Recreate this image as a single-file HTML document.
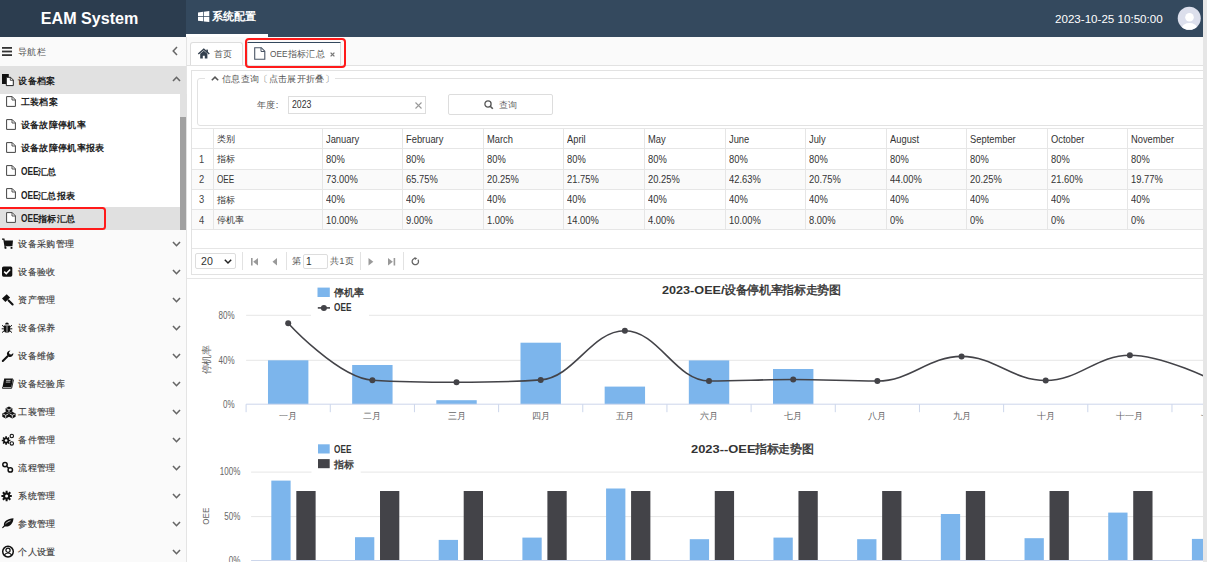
<!DOCTYPE html><html><head><meta charset="utf-8"><style>
*{margin:0;padding:0;box-sizing:border-box}
html,body{width:1207px;height:562px;overflow:hidden;background:#fff;font-family:"Liberation Sans",sans-serif;}
.a{position:absolute}
.t{position:absolute;white-space:nowrap;line-height:1}
svg{position:absolute;overflow:visible}
</style></head><body><div class="a" style="left:0px;top:0px;width:186px;height:37px;background:#2c3d4f;"></div>
<div class="a" style="left:186px;top:0px;width:1017px;height:37px;background:#34495e;"></div>
<div class="t" style="left:40.8px;top:9.9px;font-size:16.1px;color:#fff;font-weight:700;">EAM System</div>
<svg style="left:197.5px;top:11px" width="12" height="11" viewBox="0 0 12 11"><path d="M0 1.4L5.2 0.8V5.2H0Z M5.9 0.7L11.3 0V5.2H5.9Z M0 5.9H5.2V10.3L0 9.7Z M5.9 5.9H11.3V11L5.9 10.4Z" fill="#fff"/></svg>
<div class="t" style="left:212.3px;top:10.8px;font-size:11px;color:#fff;font-weight:700;">系统配置</div>
<div class="a" style="left:186px;top:34px;width:81.5px;height:3px;background:#fff;"></div>
<div class="t" style="left:1055px;top:12.9px;font-size:11.6px;color:#fff;font-weight:400;">2023-10-25 10:50:00</div>
<svg style="left:1177px;top:5.7px" width="25" height="25" viewBox="0 0 25 25"><defs><clipPath id="avc"><circle cx="12.25" cy="12.25" r="11.5"/></clipPath></defs><circle cx="12.25" cy="12.25" r="11.5" fill="#dcdfec"/><g clip-path="url(#avc)" fill="#fff"><circle cx="12.5" cy="11.3" r="4.3"/><ellipse cx="12.5" cy="22" rx="7.5" ry="5"/></g></svg>
<div class="a" style="left:0px;top:37px;width:186px;height:525px;background:#fafafa;"></div>
<div class="a" style="left:186px;top:37px;width:1px;height:525px;background:#e4e4e4;"></div>
<svg style="left:2px;top:47px" width="10" height="9" viewBox="0 0 10 9"><rect x="0" y="0" width="10" height="1.8" fill="#333"/><rect x="0" y="3.6" width="10" height="1.8" fill="#333"/><rect x="0" y="7.2" width="10" height="1.8" fill="#333"/></svg>
<div class="t" style="left:18px;top:47px;font-size:9.4px;color:#555;font-weight:400;letter-spacing:0.35px">导航栏</div>
<svg style="left:172px;top:46px" width="6" height="10" viewBox="0 0 6 10"><path d="M5 1L1.2 5L5 9" stroke="#666" stroke-width="1.5" fill="none"/></svg>
<div class="a" style="left:0px;top:66px;width:186px;height:28px;background:#e1e1e1;"></div>
<svg style="left:2px;top:74px" width="13" height="13" viewBox="0 0 13 13"><rect x="0" y="0" width="6.8" height="10" fill="#111"/><path d="M4.3 3.3H8.6L11.3 6V11.6H4.3Z" fill="#fff" stroke="#222" stroke-width="1"/><path d="M8.3 3.3V6.3H11.3" fill="none" stroke="#222" stroke-width="0.8"/></svg>
<div class="t" style="left:18.3px;top:76px;font-size:9.4px;color:#222;font-weight:700;letter-spacing:0.35px">设备档案</div>
<svg style="left:172px;top:76px" width="9" height="6" viewBox="0 0 9 6"><path d="M1 5L4.5 1.3L8 5" stroke="#666" stroke-width="1.6" fill="none"/></svg>
<div class="a" style="left:0px;top:94px;width:180px;height:136px;background:#fff;"></div>
<div class="a" style="left:180px;top:94px;width:7px;height:136px;background:#e1e1e1;"></div>
<div class="a" style="left:180px;top:117px;width:6px;height:113px;background:#a1a1a1;"></div>
<div class="a" style="left:0px;top:207px;width:180px;height:23px;background:#e0e0e0;"></div>
<svg style="left:6px;top:95.5px" width="10" height="11" viewBox="0 0 10 11"><path d="M0.6 0.6H6.2L9.4 3.8V10.4H0.6Z" fill="#fff" stroke="#444" stroke-width="1"/><path d="M6 0.6V4H9.4" fill="none" stroke="#444" stroke-width="0.9"/></svg>
<div class="t" style="left:20.5px;top:96.7px;font-size:9.4px;color:#222;font-weight:700;letter-spacing:0.35px">工装档案</div>
<svg style="left:6px;top:118.8px" width="10" height="11" viewBox="0 0 10 11"><path d="M0.6 0.6H6.2L9.4 3.8V10.4H0.6Z" fill="#fff" stroke="#444" stroke-width="1"/><path d="M6 0.6V4H9.4" fill="none" stroke="#444" stroke-width="0.9"/></svg>
<div class="t" style="left:20.5px;top:120.0px;font-size:9.4px;color:#222;font-weight:700;letter-spacing:0.35px">设备故障停机率</div>
<svg style="left:6px;top:142px" width="10" height="11" viewBox="0 0 10 11"><path d="M0.6 0.6H6.2L9.4 3.8V10.4H0.6Z" fill="#fff" stroke="#444" stroke-width="1"/><path d="M6 0.6V4H9.4" fill="none" stroke="#444" stroke-width="0.9"/></svg>
<div class="t" style="left:20.5px;top:143.2px;font-size:9.4px;color:#222;font-weight:700;letter-spacing:0.35px">设备故障停机率报表</div>
<svg style="left:6px;top:165.2px" width="10" height="11" viewBox="0 0 10 11"><path d="M0.6 0.6H6.2L9.4 3.8V10.4H0.6Z" fill="#fff" stroke="#444" stroke-width="1"/><path d="M6 0.6V4H9.4" fill="none" stroke="#444" stroke-width="0.9"/></svg>
<div class="t" style="left:20.5px;top:166.39999999999998px;font-size:9.4px;color:#222;font-weight:700;letter-spacing:0.35px"><span style="font-size:11px"><span style="display:inline-block;letter-spacing:0;transform:scaleX(0.758);transform-origin:0 50%;margin-right:-5.63px">OEE</span></span>汇总</div>
<svg style="left:6px;top:188.4px" width="10" height="11" viewBox="0 0 10 11"><path d="M0.6 0.6H6.2L9.4 3.8V10.4H0.6Z" fill="#fff" stroke="#444" stroke-width="1"/><path d="M6 0.6V4H9.4" fill="none" stroke="#444" stroke-width="0.9"/></svg>
<div class="t" style="left:20.5px;top:189.6px;font-size:9.4px;color:#222;font-weight:700;letter-spacing:0.35px"><span style="font-size:11px"><span style="display:inline-block;letter-spacing:0;transform:scaleX(0.758);transform-origin:0 50%;margin-right:-5.63px">OEE</span></span>汇总报表</div>
<svg style="left:6px;top:211.6px" width="10" height="11" viewBox="0 0 10 11"><path d="M0.6 0.6H6.2L9.4 3.8V10.4H0.6Z" fill="#fff" stroke="#444" stroke-width="1"/><path d="M6 0.6V4H9.4" fill="none" stroke="#444" stroke-width="0.9"/></svg>
<div class="t" style="left:20.5px;top:212.79999999999998px;font-size:9.4px;color:#222;font-weight:700;letter-spacing:0.35px"><span style="font-size:11px"><span style="display:inline-block;letter-spacing:0;transform:scaleX(0.758);transform-origin:0 50%;margin-right:-5.63px">OEE</span></span>指标汇总</div>
<div class="a" style="left:-3px;top:207px;width:108.5px;height:23.3px;border:2.7px solid #ff1a1a;border-radius:3.5px"></div>
<svg style="left:2px;top:237.8px" width="12" height="12" viewBox="0 0 12 12"><path d="M0 1.2H1.9L3.3 9.6" stroke="#111" stroke-width="1.3" fill="none"/><path d="M2.3 2.6H11L10.4 8.2H3.3Z" fill="#111"/><rect x="2.6" y="9" width="1.8" height="1.8" fill="#111"/><rect x="8.6" y="9" width="1.8" height="1.8" fill="#111"/></svg>
<div class="t" style="left:18.2px;top:238.9px;font-size:9.4px;color:#3a3a3a;font-weight:400;letter-spacing:0.35px;-webkit-text-stroke:0.15px #3a3a3a">设备采购管理</div>
<svg style="left:172px;top:240.8px" width="9" height="6" viewBox="0 0 9 6"><path d="M1 1L4.5 4.7L8 1" stroke="#666" stroke-width="1.6" fill="none"/></svg>
<svg style="left:2px;top:265.8px" width="12" height="12" viewBox="0 0 12 12"><rect x="0" y="0.5" width="10.3" height="10.2" rx="1.6" fill="#111"/><path d="M2.2 5.6L4.3 7.6L8.2 3.4" stroke="#fff" stroke-width="1.5" fill="none"/></svg>
<div class="t" style="left:18.2px;top:266.90000000000003px;font-size:9.4px;color:#3a3a3a;font-weight:400;letter-spacing:0.35px;-webkit-text-stroke:0.15px #3a3a3a">设备验收</div>
<svg style="left:172px;top:268.8px" width="9" height="6" viewBox="0 0 9 6"><path d="M1 1L4.5 4.7L8 1" stroke="#666" stroke-width="1.6" fill="none"/></svg>
<svg style="left:2px;top:293.8px" width="12" height="12" viewBox="0 0 12 12"><path d="M0 4.6L4.7 0.2L8.1 3.6L3.4 8Z" fill="#111"/><path d="M6.6 6.4L10.6 10.4" stroke="#111" stroke-width="2.1" stroke-linecap="round"/></svg>
<div class="t" style="left:18.2px;top:294.90000000000003px;font-size:9.4px;color:#3a3a3a;font-weight:400;letter-spacing:0.35px;-webkit-text-stroke:0.15px #3a3a3a">资产管理</div>
<svg style="left:172px;top:296.8px" width="9" height="6" viewBox="0 0 9 6"><path d="M1 1L4.5 4.7L8 1" stroke="#666" stroke-width="1.6" fill="none"/></svg>
<svg style="left:2px;top:321.8px" width="12" height="12" viewBox="0 0 12 12"><path d="M3.1 2.4A1.9 1.9 0 0 1 6.9 2.4Z" fill="#111"/><path d="M1.8 3.6H8.2V7.6A3.2 3.2 0 0 1 1.8 7.6Z" fill="#111"/><path d="M5 3.6V10.6" stroke="#fafafa" stroke-width="0.7"/><path d="M0 3.2L1.8 4.8M10 3.2L8.2 4.8M-0.3 6.8H1.8M10.3 6.8H8.2M0 10.6L2 8.9M10 10.6L8 8.9" stroke="#111" stroke-width="1"/></svg>
<div class="t" style="left:18.2px;top:322.90000000000003px;font-size:9.4px;color:#3a3a3a;font-weight:400;letter-spacing:0.35px;-webkit-text-stroke:0.15px #3a3a3a">设备保养</div>
<svg style="left:172px;top:324.8px" width="9" height="6" viewBox="0 0 9 6"><path d="M1 1L4.5 4.7L8 1" stroke="#666" stroke-width="1.6" fill="none"/></svg>
<svg style="left:2px;top:349.8px" width="12" height="12" viewBox="0 0 12 12"><path d="M0.8 11L5.6 6.2" stroke="#111" stroke-width="2" stroke-linecap="round"/><path d="M5.2 5.2A3.4 3.4 0 0 1 8.4 0.4L6.9 2.5L7.6 4.2L9.4 4.6L11.3 3.1A3.4 3.4 0 0 1 6.6 6.8Z" fill="#111"/></svg>
<div class="t" style="left:18.2px;top:350.90000000000003px;font-size:9.4px;color:#3a3a3a;font-weight:400;letter-spacing:0.35px;-webkit-text-stroke:0.15px #3a3a3a">设备维修</div>
<svg style="left:172px;top:352.8px" width="9" height="6" viewBox="0 0 9 6"><path d="M1 1L4.5 4.7L8 1" stroke="#666" stroke-width="1.6" fill="none"/></svg>
<svg style="left:2px;top:377.8px" width="12" height="12" viewBox="0 0 12 12"><path d="M2.2 0.4H11L9.3 9.2H0.5Z" fill="#111"/><path d="M0.5 9.2V10.3H9.6L11.5 1.6" stroke="#111" stroke-width="0.9" fill="none"/><path d="M4.1 2.4H8.6M3.8 4.1H8.3" stroke="#fafafa" stroke-width="0.7"/></svg>
<div class="t" style="left:18.2px;top:378.90000000000003px;font-size:9.4px;color:#3a3a3a;font-weight:400;letter-spacing:0.35px;-webkit-text-stroke:0.15px #3a3a3a">设备经验库</div>
<svg style="left:172px;top:380.8px" width="9" height="6" viewBox="0 0 9 6"><path d="M1 1L4.5 4.7L8 1" stroke="#666" stroke-width="1.6" fill="none"/></svg>
<svg style="left:2px;top:405.8px" width="12" height="12" viewBox="0 0 12 12"><path d="M3.6 2.2L7 0.4L10.4 2.2V5.4L7 7.2L3.6 5.4Z" fill="#111"/><path d="M0.3 7.6L3.7 5.8L7.1 7.6V10.8L3.7 12.6L0.3 10.8Z" fill="#111"/><path d="M6.9 7.6L10.3 5.8L13.6 7.6V10.8L10.3 12.6L6.9 10.8Z" fill="#111"/><path d="M4.4 2.6L7 3.9L9.6 2.6M7 3.9V6.4M1.1 8L3.7 9.3L6.3 8M3.7 9.3V11.8M7.7 8L10.3 9.3L12.9 8M10.3 9.3V11.8" stroke="#fafafa" stroke-width="0.8" fill="none"/></svg>
<div class="t" style="left:18.2px;top:406.90000000000003px;font-size:9.4px;color:#3a3a3a;font-weight:400;letter-spacing:0.35px;-webkit-text-stroke:0.15px #3a3a3a">工装管理</div>
<svg style="left:172px;top:408.8px" width="9" height="6" viewBox="0 0 9 6"><path d="M1 1L4.5 4.7L8 1" stroke="#666" stroke-width="1.6" fill="none"/></svg>
<svg style="left:2px;top:433.8px" width="12" height="12" viewBox="0 0 12 12"><circle cx="4.1" cy="6.5" r="3" fill="#111"/><path d="M4.1 2.2V10.8M-0.2 6.5H8.4M1.1 3.5L7.1 9.5M7.1 3.5L1.1 9.5" stroke="#111" stroke-width="1.7"/><circle cx="4.1" cy="6.5" r="1.3" fill="#fafafa"/><circle cx="9.8" cy="2" r="1.7" fill="none" stroke="#111" stroke-width="1.1"/><circle cx="9.8" cy="9.4" r="1.7" fill="none" stroke="#111" stroke-width="1.1"/></svg>
<div class="t" style="left:18.2px;top:434.90000000000003px;font-size:9.4px;color:#3a3a3a;font-weight:400;letter-spacing:0.35px;-webkit-text-stroke:0.15px #3a3a3a">备件管理</div>
<svg style="left:172px;top:436.8px" width="9" height="6" viewBox="0 0 9 6"><path d="M1 1L4.5 4.7L8 1" stroke="#666" stroke-width="1.6" fill="none"/></svg>
<svg style="left:2px;top:461.8px" width="12" height="12" viewBox="0 0 12 12"><circle cx="3" cy="2.6" r="2.2" fill="none" stroke="#111" stroke-width="1.5"/><circle cx="8.3" cy="7.9" r="2.2" fill="none" stroke="#111" stroke-width="1.5"/><path d="M4.6 4.2L6.7 6.3" stroke="#111" stroke-width="1.5"/></svg>
<div class="t" style="left:18.2px;top:462.90000000000003px;font-size:9.4px;color:#3a3a3a;font-weight:400;letter-spacing:0.35px;-webkit-text-stroke:0.15px #3a3a3a">流程管理</div>
<svg style="left:172px;top:464.8px" width="9" height="6" viewBox="0 0 9 6"><path d="M1 1L4.5 4.7L8 1" stroke="#666" stroke-width="1.6" fill="none"/></svg>
<svg style="left:2px;top:489.8px" width="12" height="12" viewBox="0 0 12 12"><circle cx="4.6" cy="6" r="3.5" fill="#111"/><path d="M4.6 0.8V11.2M-0.6 6H9.8M0.9 2.3L8.3 9.7M8.3 2.3L0.9 9.7" stroke="#111" stroke-width="2"/><circle cx="4.6" cy="6" r="1.5" fill="#fafafa"/></svg>
<div class="t" style="left:18.2px;top:490.90000000000003px;font-size:9.4px;color:#3a3a3a;font-weight:400;letter-spacing:0.35px;-webkit-text-stroke:0.15px #3a3a3a">系统管理</div>
<svg style="left:172px;top:492.8px" width="9" height="6" viewBox="0 0 9 6"><path d="M1 1L4.5 4.7L8 1" stroke="#666" stroke-width="1.6" fill="none"/></svg>
<svg style="left:2px;top:517.8px" width="12" height="12" viewBox="0 0 12 12"><path d="M0 9.8C0.8 8.6 1.6 7.8 2 7.6C1.2 3 5.5 1 11.5 0.2C11.2 5.8 7.5 9.4 2.8 8.4L0.8 10.3Z" fill="#111"/><path d="M3.5 5.8C5 4.2 6.8 3.3 8.5 2.8" stroke="#fafafa" stroke-width="0.8" fill="none"/></svg>
<div class="t" style="left:18.2px;top:518.9px;font-size:9.4px;color:#3a3a3a;font-weight:400;letter-spacing:0.35px;-webkit-text-stroke:0.15px #3a3a3a">参数管理</div>
<svg style="left:172px;top:520.8px" width="9" height="6" viewBox="0 0 9 6"><path d="M1 1L4.5 4.7L8 1" stroke="#666" stroke-width="1.6" fill="none"/></svg>
<svg style="left:2px;top:545.8px" width="12" height="12" viewBox="0 0 12 12"><circle cx="6" cy="5.6" r="5.3" fill="#fff" stroke="#111" stroke-width="1.5"/><circle cx="6" cy="4.2" r="2.1" fill="#fff" stroke="#111" stroke-width="1.2"/><path d="M2.3 9.3C3 7.6 4.4 7 6 7C7.6 7 9 7.6 9.7 9.3" fill="none" stroke="#111" stroke-width="1.2"/></svg>
<div class="t" style="left:18.2px;top:546.9px;font-size:9.4px;color:#3a3a3a;font-weight:400;letter-spacing:0.35px;-webkit-text-stroke:0.15px #3a3a3a">个人设置</div>
<svg style="left:172px;top:548.8px" width="9" height="6" viewBox="0 0 9 6"><path d="M1 1L4.5 4.7L8 1" stroke="#666" stroke-width="1.6" fill="none"/></svg>
<div class="a" style="left:187px;top:37px;width:1016px;height:29px;background:#fafafa;"></div>
<div class="a" style="left:187px;top:65px;width:1016px;height:1px;background:#e2e2e2;"></div>
<div class="a" style="left:190.3px;top:41.7px;width:52.3px;height:23.6px;background:#fff;border:1px solid #ddd;border-bottom:none;border-radius:3px 3px 0 0"></div>
<svg style="left:198px;top:48.5px" width="12" height="10" viewBox="0 0 12 10"><path d="M0.3 5L5.8 0.3L11.3 5" stroke="#34404e" stroke-width="1.5" fill="none"/><path d="M2.2 4.8L5.8 1.8L9.4 4.8V9.5H6.8V6.8H4.8V9.5H2.2Z" fill="#34404e"/><rect x="8.3" y="0.6" width="1.6" height="3" fill="#34404e"/></svg>
<div class="t" style="left:214px;top:49px;font-size:9.4px;color:#555;font-weight:400;letter-spacing:0.35px">首页</div>
<div class="a" style="left:247px;top:41.6px;width:93.5px;height:23.8px;background:#fff;border:1px solid #ddd;border-top:1.6px solid #34495e;border-bottom:none"></div>
<svg style="left:254px;top:47.3px" width="12" height="13" viewBox="0 0 12 13"><path d="M0.7 0.7H7.3L10.8 4.2V12.2H0.7Z" fill="#fff" stroke="#4a5565" stroke-width="1.1"/><path d="M7 0.7V4.5H10.8" fill="none" stroke="#4a5565" stroke-width="1"/></svg>
<div class="t" style="left:270px;top:49px;font-size:9.4px;color:#555;font-weight:400;letter-spacing:0.35px"><span style="display:inline-block;letter-spacing:0;transform:scaleX(0.883);transform-origin:0 50%;margin-right:-2.31px">OEE</span>指标汇总</div>
<svg style="left:330px;top:51.5px" width="5" height="5" viewBox="0 0 5 5"><path d="M0.6 0.6L4.4 4.4M4.4 0.6L0.6 4.4" stroke="#777" stroke-width="1.3"/></svg>
<div class="a" style="left:244.8px;top:38.2px;width:101.4px;height:30px;border:2.9px solid #ff1a1a;border-radius:4px"></div>
<div class="a" style="left:191px;top:70.3px;width:1030px;height:204.5px;border:1px solid #e2e2e2;background:#fff"></div>
<div class="a" style="left:197.3px;top:77.8px;width:1030px;height:48px;border:1px solid #e2e2e2;border-radius:3px"></div>
<div class="a" style="left:205px;top:74px;width:130px;height:6px;background:#fff;"></div>
<svg style="left:211px;top:76.3px" width="8" height="5" viewBox="0 0 8 5"><path d="M0.8 4.3L4 1.1L7.2 4.3" stroke="#555" stroke-width="1.5" fill="none"/></svg>
<div class="t" style="left:222px;top:74.3px;font-size:9.4px;color:#555;font-weight:400;letter-spacing:0.35px">信息查询〔点击展开折叠〕</div>
<div class="t" style="left:257px;top:100.2px;font-size:9.4px;color:#555;font-weight:400;letter-spacing:0.35px">年度:</div>
<div class="a" style="left:288px;top:96px;width:137.7px;height:17.8px;border:1px solid #ddd"></div>
<div class="t" style="left:292px;top:99.8px;font-size:10.4px;color:#333;font-weight:400;transform:scaleX(.84);transform-origin:0 0">2023</div>
<svg style="left:415px;top:102px" width="7" height="7" viewBox="0 0 7 7"><path d="M0.5 0.5L6.5 6.5M6.5 0.5L0.5 6.5" stroke="#999" stroke-width="1.1"/></svg>
<div class="a" style="left:448px;top:94.3px;width:104.6px;height:20.6px;border:1px solid #ddd;border-radius:2px"></div>
<svg style="left:484px;top:100px" width="10" height="10" viewBox="0 0 10 10"><circle cx="4" cy="4" r="3.1" fill="none" stroke="#555" stroke-width="1.3"/><path d="M6.2 6.2L8.8 8.8" stroke="#555" stroke-width="1.6"/></svg>
<div class="t" style="left:499px;top:99.8px;font-size:9.4px;color:#666;font-weight:400;letter-spacing:0.35px">查询</div>
<div class="a" style="left:191.5px;top:169.6px;width:1020px;height:19.2px;background:#fafafa;"></div>
<div class="a" style="left:191.5px;top:210px;width:1020px;height:19px;background:#fafafa;"></div>
<div class="a" style="left:191.5px;top:128px;width:1020px;height:1px;background:#e6e6e6;"></div>
<div class="a" style="left:191.5px;top:148px;width:1020px;height:1px;background:#e6e6e6;"></div>
<div class="a" style="left:191.5px;top:168.6px;width:1020px;height:1px;background:#e6e6e6;"></div>
<div class="a" style="left:191.5px;top:188.8px;width:1020px;height:1px;background:#e6e6e6;"></div>
<div class="a" style="left:191.5px;top:209px;width:1020px;height:1px;background:#e6e6e6;"></div>
<div class="a" style="left:191.5px;top:229px;width:1020px;height:1px;background:#e6e6e6;"></div>
<div class="a" style="left:213px;top:128px;width:1px;height:102px;background:#e6e6e6;"></div>
<div class="a" style="left:322px;top:128px;width:1px;height:102px;background:#e6e6e6;"></div>
<div class="a" style="left:402.3px;top:128px;width:1px;height:102px;background:#e6e6e6;"></div>
<div class="a" style="left:482.7px;top:128px;width:1px;height:102px;background:#e6e6e6;"></div>
<div class="a" style="left:563.2px;top:128px;width:1px;height:102px;background:#e6e6e6;"></div>
<div class="a" style="left:643.6px;top:128px;width:1px;height:102px;background:#e6e6e6;"></div>
<div class="a" style="left:724.8px;top:128px;width:1px;height:102px;background:#e6e6e6;"></div>
<div class="a" style="left:805.3px;top:128px;width:1px;height:102px;background:#e6e6e6;"></div>
<div class="a" style="left:885.8px;top:128px;width:1px;height:102px;background:#e6e6e6;"></div>
<div class="a" style="left:966.3px;top:128px;width:1px;height:102px;background:#e6e6e6;"></div>
<div class="a" style="left:1046.9px;top:128px;width:1px;height:102px;background:#e6e6e6;"></div>
<div class="a" style="left:1127.4px;top:128px;width:1px;height:102px;background:#e6e6e6;"></div>
<div class="a" style="left:1208px;top:128px;width:1px;height:102px;background:#e6e6e6;"></div>
<div class="t" style="left:217px;top:134.3px;font-size:9.4px;color:#333;font-weight:400;">类别</div>
<div class="t" style="left:326px;top:133.6px;font-size:10.5px;color:#333;font-weight:400;transform:scaleX(.89);transform-origin:0 0">January</div>
<div class="t" style="left:406.3px;top:133.6px;font-size:10.5px;color:#333;font-weight:400;transform:scaleX(.89);transform-origin:0 0">February</div>
<div class="t" style="left:486.7px;top:133.6px;font-size:10.5px;color:#333;font-weight:400;transform:scaleX(.89);transform-origin:0 0">March</div>
<div class="t" style="left:567.2px;top:133.6px;font-size:10.5px;color:#333;font-weight:400;transform:scaleX(.89);transform-origin:0 0">April</div>
<div class="t" style="left:647.6px;top:133.6px;font-size:10.5px;color:#333;font-weight:400;transform:scaleX(.89);transform-origin:0 0">May</div>
<div class="t" style="left:728.8px;top:133.6px;font-size:10.5px;color:#333;font-weight:400;transform:scaleX(.89);transform-origin:0 0">June</div>
<div class="t" style="left:809.3px;top:133.6px;font-size:10.5px;color:#333;font-weight:400;transform:scaleX(.89);transform-origin:0 0">July</div>
<div class="t" style="left:889.8px;top:133.6px;font-size:10.5px;color:#333;font-weight:400;transform:scaleX(.89);transform-origin:0 0">August</div>
<div class="t" style="left:970.3px;top:133.6px;font-size:10.5px;color:#333;font-weight:400;transform:scaleX(.89);transform-origin:0 0">September</div>
<div class="t" style="left:1050.9px;top:133.6px;font-size:10.5px;color:#333;font-weight:400;transform:scaleX(.89);transform-origin:0 0">October</div>
<div class="t" style="left:1131.4px;top:133.6px;font-size:10.5px;color:#333;font-weight:400;transform:scaleX(.89);transform-origin:0 0">November</div>
<div class="t" style="left:199.3px;top:153.6px;font-size:10.5px;color:#444;font-weight:400;transform:scaleX(.89);transform-origin:0 0">1</div>
<div class="t" style="left:217px;top:154.3px;font-size:9.4px;color:#333;font-weight:400;">指标</div>
<div class="t" style="left:326px;top:153.6px;font-size:10.5px;color:#333;font-weight:400;transform:scaleX(.89);transform-origin:0 0">80%</div>
<div class="t" style="left:406.3px;top:153.6px;font-size:10.5px;color:#333;font-weight:400;transform:scaleX(.89);transform-origin:0 0">80%</div>
<div class="t" style="left:486.7px;top:153.6px;font-size:10.5px;color:#333;font-weight:400;transform:scaleX(.89);transform-origin:0 0">80%</div>
<div class="t" style="left:567.2px;top:153.6px;font-size:10.5px;color:#333;font-weight:400;transform:scaleX(.89);transform-origin:0 0">80%</div>
<div class="t" style="left:647.6px;top:153.6px;font-size:10.5px;color:#333;font-weight:400;transform:scaleX(.89);transform-origin:0 0">80%</div>
<div class="t" style="left:728.8px;top:153.6px;font-size:10.5px;color:#333;font-weight:400;transform:scaleX(.89);transform-origin:0 0">80%</div>
<div class="t" style="left:809.3px;top:153.6px;font-size:10.5px;color:#333;font-weight:400;transform:scaleX(.89);transform-origin:0 0">80%</div>
<div class="t" style="left:889.8px;top:153.6px;font-size:10.5px;color:#333;font-weight:400;transform:scaleX(.89);transform-origin:0 0">80%</div>
<div class="t" style="left:970.3px;top:153.6px;font-size:10.5px;color:#333;font-weight:400;transform:scaleX(.89);transform-origin:0 0">80%</div>
<div class="t" style="left:1050.9px;top:153.6px;font-size:10.5px;color:#333;font-weight:400;transform:scaleX(.89);transform-origin:0 0">80%</div>
<div class="t" style="left:1131.4px;top:153.6px;font-size:10.5px;color:#333;font-weight:400;transform:scaleX(.89);transform-origin:0 0">80%</div>
<div class="t" style="left:199.3px;top:174.2px;font-size:10.5px;color:#444;font-weight:400;transform:scaleX(.89);transform-origin:0 0">2</div>
<div class="t" style="left:217px;top:174.2px;font-size:10.5px;color:#333;font-weight:400;"><span style="display:inline-block;letter-spacing:0;transform:scaleX(0.777);transform-origin:0 50%;margin-right:-4.93px">OEE</span></div>
<div class="t" style="left:326px;top:174.2px;font-size:10.5px;color:#333;font-weight:400;transform:scaleX(.89);transform-origin:0 0">73.00%</div>
<div class="t" style="left:406.3px;top:174.2px;font-size:10.5px;color:#333;font-weight:400;transform:scaleX(.89);transform-origin:0 0">65.75%</div>
<div class="t" style="left:486.7px;top:174.2px;font-size:10.5px;color:#333;font-weight:400;transform:scaleX(.89);transform-origin:0 0">20.25%</div>
<div class="t" style="left:567.2px;top:174.2px;font-size:10.5px;color:#333;font-weight:400;transform:scaleX(.89);transform-origin:0 0">21.75%</div>
<div class="t" style="left:647.6px;top:174.2px;font-size:10.5px;color:#333;font-weight:400;transform:scaleX(.89);transform-origin:0 0">20.25%</div>
<div class="t" style="left:728.8px;top:174.2px;font-size:10.5px;color:#333;font-weight:400;transform:scaleX(.89);transform-origin:0 0">42.63%</div>
<div class="t" style="left:809.3px;top:174.2px;font-size:10.5px;color:#333;font-weight:400;transform:scaleX(.89);transform-origin:0 0">20.75%</div>
<div class="t" style="left:889.8px;top:174.2px;font-size:10.5px;color:#333;font-weight:400;transform:scaleX(.89);transform-origin:0 0">44.00%</div>
<div class="t" style="left:970.3px;top:174.2px;font-size:10.5px;color:#333;font-weight:400;transform:scaleX(.89);transform-origin:0 0">20.25%</div>
<div class="t" style="left:1050.9px;top:174.2px;font-size:10.5px;color:#333;font-weight:400;transform:scaleX(.89);transform-origin:0 0">21.60%</div>
<div class="t" style="left:1131.4px;top:174.2px;font-size:10.5px;color:#333;font-weight:400;transform:scaleX(.89);transform-origin:0 0">19.77%</div>
<div class="t" style="left:199.3px;top:194.4px;font-size:10.5px;color:#444;font-weight:400;transform:scaleX(.89);transform-origin:0 0">3</div>
<div class="t" style="left:217px;top:195.10000000000002px;font-size:9.4px;color:#333;font-weight:400;">指标</div>
<div class="t" style="left:326px;top:194.4px;font-size:10.5px;color:#333;font-weight:400;transform:scaleX(.89);transform-origin:0 0">40%</div>
<div class="t" style="left:406.3px;top:194.4px;font-size:10.5px;color:#333;font-weight:400;transform:scaleX(.89);transform-origin:0 0">40%</div>
<div class="t" style="left:486.7px;top:194.4px;font-size:10.5px;color:#333;font-weight:400;transform:scaleX(.89);transform-origin:0 0">40%</div>
<div class="t" style="left:567.2px;top:194.4px;font-size:10.5px;color:#333;font-weight:400;transform:scaleX(.89);transform-origin:0 0">40%</div>
<div class="t" style="left:647.6px;top:194.4px;font-size:10.5px;color:#333;font-weight:400;transform:scaleX(.89);transform-origin:0 0">40%</div>
<div class="t" style="left:728.8px;top:194.4px;font-size:10.5px;color:#333;font-weight:400;transform:scaleX(.89);transform-origin:0 0">40%</div>
<div class="t" style="left:809.3px;top:194.4px;font-size:10.5px;color:#333;font-weight:400;transform:scaleX(.89);transform-origin:0 0">40%</div>
<div class="t" style="left:889.8px;top:194.4px;font-size:10.5px;color:#333;font-weight:400;transform:scaleX(.89);transform-origin:0 0">40%</div>
<div class="t" style="left:970.3px;top:194.4px;font-size:10.5px;color:#333;font-weight:400;transform:scaleX(.89);transform-origin:0 0">40%</div>
<div class="t" style="left:1050.9px;top:194.4px;font-size:10.5px;color:#333;font-weight:400;transform:scaleX(.89);transform-origin:0 0">40%</div>
<div class="t" style="left:1131.4px;top:194.4px;font-size:10.5px;color:#333;font-weight:400;transform:scaleX(.89);transform-origin:0 0">40%</div>
<div class="t" style="left:199.3px;top:214.6px;font-size:10.5px;color:#444;font-weight:400;transform:scaleX(.89);transform-origin:0 0">4</div>
<div class="t" style="left:217px;top:215.3px;font-size:9.4px;color:#333;font-weight:400;">停机率</div>
<div class="t" style="left:326px;top:214.6px;font-size:10.5px;color:#333;font-weight:400;transform:scaleX(.89);transform-origin:0 0">10.00%</div>
<div class="t" style="left:406.3px;top:214.6px;font-size:10.5px;color:#333;font-weight:400;transform:scaleX(.89);transform-origin:0 0">9.00%</div>
<div class="t" style="left:486.7px;top:214.6px;font-size:10.5px;color:#333;font-weight:400;transform:scaleX(.89);transform-origin:0 0">1.00%</div>
<div class="t" style="left:567.2px;top:214.6px;font-size:10.5px;color:#333;font-weight:400;transform:scaleX(.89);transform-origin:0 0">14.00%</div>
<div class="t" style="left:647.6px;top:214.6px;font-size:10.5px;color:#333;font-weight:400;transform:scaleX(.89);transform-origin:0 0">4.00%</div>
<div class="t" style="left:728.8px;top:214.6px;font-size:10.5px;color:#333;font-weight:400;transform:scaleX(.89);transform-origin:0 0">10.00%</div>
<div class="t" style="left:809.3px;top:214.6px;font-size:10.5px;color:#333;font-weight:400;transform:scaleX(.89);transform-origin:0 0">8.00%</div>
<div class="t" style="left:889.8px;top:214.6px;font-size:10.5px;color:#333;font-weight:400;transform:scaleX(.89);transform-origin:0 0">0%</div>
<div class="t" style="left:970.3px;top:214.6px;font-size:10.5px;color:#333;font-weight:400;transform:scaleX(.89);transform-origin:0 0">0%</div>
<div class="t" style="left:1050.9px;top:214.6px;font-size:10.5px;color:#333;font-weight:400;transform:scaleX(.89);transform-origin:0 0">0%</div>
<div class="t" style="left:1131.4px;top:214.6px;font-size:10.5px;color:#333;font-weight:400;transform:scaleX(.89);transform-origin:0 0">0%</div>
<div class="a" style="left:191.5px;top:248px;width:1020px;height:1px;background:#e6e6e6;"></div>
<div class="a" style="left:195px;top:253.2px;width:41px;height:16px;border:1px solid #ddd;border-radius:2px"></div>
<div class="t" style="left:201px;top:256.3px;font-size:10.6px;color:#333;font-weight:400;">20</div>
<svg style="left:224px;top:259px" width="8" height="5" viewBox="0 0 8 5"><path d="M0.8 0.8L4 4L7.2 0.8" stroke="#222" stroke-width="1.5" fill="none"/></svg>
<div class="a" style="left:242px;top:252px;width:1px;height:18px;background:#e2e2e2;"></div>
<div class="a" style="left:285.5px;top:252px;width:1px;height:18px;background:#e2e2e2;"></div>
<div class="a" style="left:359.5px;top:252px;width:1px;height:18px;background:#e2e2e2;"></div>
<div class="a" style="left:402.5px;top:252px;width:1px;height:18px;background:#e2e2e2;"></div>
<svg style="left:251px;top:258px" width="8" height="8" viewBox="0 0 8 8"><rect x="0" y="0" width="1.6" height="7.5" fill="#999"/><path d="M7 0V7.5L2.2 3.75Z" fill="#999"/></svg>
<svg style="left:272px;top:258px" width="6" height="8" viewBox="0 0 6 8"><path d="M5 0V7.5L0.5 3.75Z" fill="#999"/></svg>
<div class="t" style="left:292px;top:256.3px;font-size:9.4px;color:#555;font-weight:400;letter-spacing:0.35px">第</div>
<div class="a" style="left:303px;top:253.5px;width:24.5px;height:15.5px;border:1px solid #ddd;border-radius:2px"></div>
<div class="t" style="left:306px;top:257px;font-size:10.2px;color:#333;font-weight:400;">1</div>
<div class="t" style="left:330px;top:256.3px;font-size:9.4px;color:#555;font-weight:400;letter-spacing:0.35px">共1页</div>
<svg style="left:368px;top:258px" width="6" height="8" viewBox="0 0 6 8"><path d="M0.5 0V7.5L5.3 3.75Z" fill="#999"/></svg>
<svg style="left:388px;top:258px" width="8" height="8" viewBox="0 0 8 8"><path d="M0 0V7.5L4.8 3.75Z" fill="#999"/><rect x="5.6" y="0" width="1.6" height="7.5" fill="#999"/></svg>
<svg style="left:410.5px;top:256.5px" width="9" height="9" viewBox="0 0 9 9"><path d="M6.9 2.6A3.2 3.2 0 1 1 4.2 1.3" fill="none" stroke="#666" stroke-width="1.3"/><path d="M3.3 0L6.3 1.2L4.2 3.1Z" fill="#666"/></svg>
<div class="a" style="left:187px;top:278px;width:1016px;height:1px;background:#e6e6e6;"></div>
<svg style="left:0;top:0" width="1207" height="562" viewBox="0 0 1207 562"><defs><clipPath id="plot"><rect x="187" y="279" width="1016" height="283"/></clipPath></defs><g clip-path="url(#plot)"><path d="M246.1 315.3H311M369 315.3H1210M246.1 360.3H1210" stroke="#e6e6e6" stroke-width="1"/><rect x="267.99" y="360.3" width="40.4" height="43.90" fill="#7cb5ec"/><rect x="352.16" y="365" width="40.4" height="39.20" fill="#7cb5ec"/><rect x="436.32" y="400.2" width="40.4" height="4.00" fill="#7cb5ec"/><rect x="520.50" y="342.7" width="40.4" height="61.50" fill="#7cb5ec"/><rect x="604.66" y="386.6" width="40.4" height="17.60" fill="#7cb5ec"/><rect x="688.83" y="360.4" width="40.4" height="43.80" fill="#7cb5ec"/><rect x="773.00" y="369" width="40.4" height="35.20" fill="#7cb5ec"/><path d="M246.1 404.2H1210" stroke="#ccd6eb" stroke-width="1"/><path d="M246.10 404.2V412.2M330.27 404.2V412.2M414.44 404.2V412.2M498.61 404.2V412.2M582.78 404.2V412.2M666.95 404.2V412.2M751.12 404.2V412.2M835.29 404.2V412.2M919.46 404.2V412.2M1003.63 404.2V412.2M1087.80 404.2V412.2M1171.97 404.2V412.2M1256.14 404.2V412.2" stroke="#ccd6eb" stroke-width="1"/><path d="M288.19 323.20 C288.19 323.20 338.69 378.10 372.36 380.20 C406.02 382.30 422.86 382.30 456.52 382.30 C490.19 382.30 507.03 382.30 540.70 379.90 C574.36 377.50 591.20 330.80 624.87 330.80 C658.53 330.80 675.37 381.00 709.03 381.00 C742.70 381.00 759.54 379.50 793.21 379.50 C826.87 379.50 843.71 381.00 877.38 381.00 C911.04 381.00 927.88 356.40 961.55 356.40 C995.21 356.40 1012.05 380.50 1045.71 380.50 C1079.38 380.50 1096.22 355.20 1129.88 355.20 C1163.55 355.20 1214.06 381.00 1214.06 381.00" stroke="#434348" stroke-width="1.6" fill="none"/><circle cx="288.19" cy="323.2" r="3" fill="#434348"/><circle cx="372.36" cy="380.2" r="3" fill="#434348"/><circle cx="456.52" cy="382.3" r="3" fill="#434348"/><circle cx="540.70" cy="379.9" r="3" fill="#434348"/><circle cx="624.87" cy="330.8" r="3" fill="#434348"/><circle cx="709.03" cy="381" r="3" fill="#434348"/><circle cx="793.21" cy="379.5" r="3" fill="#434348"/><circle cx="877.38" cy="381" r="3" fill="#434348"/><circle cx="961.55" cy="356.4" r="3" fill="#434348"/><circle cx="1045.71" cy="380.5" r="3" fill="#434348"/><circle cx="1129.88" cy="355.2" r="3" fill="#434348"/><circle cx="1214.06" cy="381" r="3" fill="#434348"/><rect x="317.5" y="287.6" width="12.3" height="9.4" fill="#7cb5ec"/><path d="M317.8 307.9H330" stroke="#434348" stroke-width="1.6"/><circle cx="323.9" cy="307.9" r="3" fill="#434348"/><path d="M251.1 472.1H311.5M360.7 472.1H1210M251.1 516.6H1210" stroke="#e6e6e6" stroke-width="1"/><rect x="271.32" y="480.6" width="19.3" height="79.90" fill="#7cb5ec"/><rect x="296.32" y="491" width="19.3" height="69.50" fill="#434348"/><rect x="355.01" y="537.2" width="19.3" height="23.30" fill="#7cb5ec"/><rect x="380.01" y="491" width="19.3" height="69.50" fill="#434348"/><rect x="438.70" y="539.9" width="19.3" height="20.60" fill="#7cb5ec"/><rect x="463.70" y="491" width="19.3" height="69.50" fill="#434348"/><rect x="522.39" y="537.6" width="19.3" height="22.90" fill="#7cb5ec"/><rect x="547.39" y="491" width="19.3" height="69.50" fill="#434348"/><rect x="606.08" y="488.5" width="19.3" height="72.00" fill="#7cb5ec"/><rect x="631.08" y="491" width="19.3" height="69.50" fill="#434348"/><rect x="689.77" y="539.2" width="19.3" height="21.30" fill="#7cb5ec"/><rect x="714.77" y="491" width="19.3" height="69.50" fill="#434348"/><rect x="773.46" y="537.6" width="19.3" height="22.90" fill="#7cb5ec"/><rect x="798.46" y="491" width="19.3" height="69.50" fill="#434348"/><rect x="857.15" y="539.2" width="19.3" height="21.30" fill="#7cb5ec"/><rect x="882.15" y="491" width="19.3" height="69.50" fill="#434348"/><rect x="940.84" y="514" width="19.3" height="46.50" fill="#7cb5ec"/><rect x="965.84" y="491" width="19.3" height="69.50" fill="#434348"/><rect x="1024.53" y="538.2" width="19.3" height="22.30" fill="#7cb5ec"/><rect x="1049.53" y="491" width="19.3" height="69.50" fill="#434348"/><rect x="1108.22" y="512.6" width="19.3" height="47.90" fill="#7cb5ec"/><rect x="1133.22" y="491" width="19.3" height="69.50" fill="#434348"/><rect x="1191.91" y="538.9" width="19.3" height="21.60" fill="#7cb5ec"/><rect x="1216.91" y="491" width="19.3" height="69.50" fill="#434348"/><path d="M251.1 560.5H1210" stroke="#ccd6eb" stroke-width="1"/><rect x="318" y="444.3" width="11.7" height="9.2" fill="#7cb5ec"/><rect x="318" y="459.1" width="11.7" height="9.1" fill="#434348"/></g></svg>
<div class="t" style="left:661.5px;top:284.2px;font-size:11.7px;color:#333;font-weight:700;"><span style="display:inline-block;letter-spacing:0;transform:scaleX(1.081);transform-origin:0 50%;margin-right:4.67px">2023-OEE/</span><span style="letter-spacing:-0.32px;font-weight:400;-webkit-text-stroke:0.4px #333">设备停机率指标走势图</span></div>
<div class="t" style="left:334px;top:287.8px;font-size:9.5px;color:#333;font-weight:400;-webkit-text-stroke:0.35px #333">停机率</div>
<div class="t" style="left:334px;top:303.3px;font-size:10.2px;color:#333;font-weight:700;"><span style="display:inline-block;letter-spacing:0;transform:scaleX(0.808);transform-origin:0 50%;margin-right:-4.14px">OEE</span></div>
<div class="t" style="left:160px;width:74.6px;text-align:right;top:310.6px;font-size:10px;color:#666;transform:scaleX(.8);transform-origin:100% 0">80%</div>
<div class="t" style="left:160px;width:74.6px;text-align:right;top:355.6px;font-size:10px;color:#666;transform:scaleX(.8);transform-origin:100% 0">40%</div>
<div class="t" style="left:160px;width:74.6px;text-align:right;top:399.5px;font-size:10px;color:#666;transform:scaleX(.8);transform-origin:100% 0">0%</div>
<div class="t" style="left:183.8px;top:355px;width:46px;text-align:center;font-size:10px;letter-spacing:-0.4px;color:#666;transform:rotate(-90deg)">停机率</div>
<div class="t" style="left:248.19px;width:80px;text-align:center;top:412.3px;font-size:9.3px;color:#666">一月</div>
<div class="t" style="left:332.36px;width:80px;text-align:center;top:412.3px;font-size:9.3px;color:#666">二月</div>
<div class="t" style="left:416.52px;width:80px;text-align:center;top:412.3px;font-size:9.3px;color:#666">三月</div>
<div class="t" style="left:500.70px;width:80px;text-align:center;top:412.3px;font-size:9.3px;color:#666">四月</div>
<div class="t" style="left:584.87px;width:80px;text-align:center;top:412.3px;font-size:9.3px;color:#666">五月</div>
<div class="t" style="left:669.03px;width:80px;text-align:center;top:412.3px;font-size:9.3px;color:#666">六月</div>
<div class="t" style="left:753.21px;width:80px;text-align:center;top:412.3px;font-size:9.3px;color:#666">七月</div>
<div class="t" style="left:837.38px;width:80px;text-align:center;top:412.3px;font-size:9.3px;color:#666">八月</div>
<div class="t" style="left:921.55px;width:80px;text-align:center;top:412.3px;font-size:9.3px;color:#666">九月</div>
<div class="t" style="left:1005.71px;width:80px;text-align:center;top:412.3px;font-size:9.3px;color:#666">十月</div>
<div class="t" style="left:1089.88px;width:80px;text-align:center;top:412.3px;font-size:9.3px;color:#666">十一月</div>
<div class="t" style="left:1174.06px;width:80px;text-align:center;top:412.3px;font-size:9.3px;color:#666">十二月</div>
<div class="t" style="left:690.5px;top:442.6px;font-size:11.7px;color:#333;font-weight:700;"><span style="display:inline-block;letter-spacing:0;transform:scaleX(1.103);transform-origin:0 50%;margin-right:6.03px">2023--OEE</span><span style="letter-spacing:-0.32px;font-weight:400;-webkit-text-stroke:0.4px #333">指标走势图</span></div>
<div class="t" style="left:334px;top:444.9px;font-size:10.2px;color:#333;font-weight:700;"><span style="display:inline-block;letter-spacing:0;transform:scaleX(0.808);transform-origin:0 50%;margin-right:-4.14px">OEE</span></div>
<div class="t" style="left:334px;top:459.6px;font-size:9.5px;color:#333;font-weight:400;-webkit-text-stroke:0.35px #333">指标</div>
<div class="t" style="left:160px;width:80.3px;text-align:right;top:467.40000000000003px;font-size:10px;color:#666;transform:scaleX(.8);transform-origin:100% 0">100%</div>
<div class="t" style="left:160px;width:80.3px;text-align:right;top:511.90000000000003px;font-size:10px;color:#666;transform:scaleX(.8);transform-origin:100% 0">50%</div>
<div class="t" style="left:160px;width:80.3px;text-align:right;top:555.8px;font-size:10px;color:#666;transform:scaleX(.8);transform-origin:100% 0">0%</div>
<div class="t" style="left:183.5px;top:510.6px;width:46px;text-align:center;font-size:9.3px;color:#666;transform:rotate(-90deg)"><span style="display:inline-block;letter-spacing:0;transform:scaleX(0.867);transform-origin:0 50%;margin-right:-2.60px">OEE</span></div>
<div class="a" style="left:1203px;top:0px;width:4px;height:562px;background:#e6e6e6;"></div></body></html>
